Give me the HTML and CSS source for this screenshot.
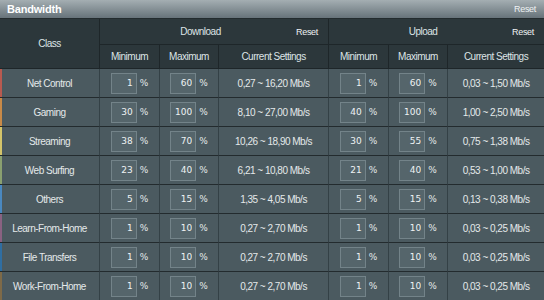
FILE: index.html
```html
<!DOCTYPE html>
<html lang="en">
<head>
<meta charset="UTF-8">
<title>Bandwidth</title>
<link rel="stylesheet" href="styles.css">
</head>
<body>
<div class="panel">
  <div class="panel-title">
    <span class="panel-name">Bandwidth</span>
    <a class="reset" href="#">Reset</a>
  </div>
  <table class="qos">
    <colgroup>
      <col class="w-class">
      <col class="w-min">
      <col class="w-max">
      <col class="w-cur">
      <col class="w-min2">
      <col class="w-max">
      <col class="w-cur2">
    </colgroup>
    <thead>
      <tr class="head-top">
        <th rowspan="2">Class</th>
        <th colspan="3">
          <div class="group">
            <span class="group-name">Download</span>
            <a class="reset" href="#">Reset</a>
          </div>
        </th>
        <th colspan="3">
          <div class="group">
            <span class="group-name">Upload</span>
            <a class="reset" href="#">Reset</a>
          </div>
        </th>
      </tr>
      <tr class="head-sub">
        <th>Minimum</th>
        <th>Maximum</th>
        <th>Current Settings</th>
        <th>Minimum</th>
        <th>Maximum</th>
        <th>Current Settings</th>
      </tr>
    </thead>
    <tbody>
      <tr>
        <td class="cls cls-net">Net Control</td>
        <td><div class="pct"><input type="text" value="1"><span>%</span></div></td>
        <td><div class="pct"><input type="text" value="60"><span>%</span></div></td>
        <td>0,27 ~ 16,20 Mb/s</td>
        <td><div class="pct"><input type="text" value="1"><span>%</span></div></td>
        <td><div class="pct"><input type="text" value="60"><span>%</span></div></td>
        <td>0,03 ~ 1,50 Mb/s</td>
      </tr>
      <tr>
        <td class="cls cls-gaming">Gaming</td>
        <td><div class="pct"><input type="text" value="30"><span>%</span></div></td>
        <td><div class="pct"><input type="text" value="100"><span>%</span></div></td>
        <td>8,10 ~ 27,00 Mb/s</td>
        <td><div class="pct"><input type="text" value="40"><span>%</span></div></td>
        <td><div class="pct"><input type="text" value="100"><span>%</span></div></td>
        <td>1,00 ~ 2,50 Mb/s</td>
      </tr>
      <tr>
        <td class="cls cls-stream">Streaming</td>
        <td><div class="pct"><input type="text" value="38"><span>%</span></div></td>
        <td><div class="pct"><input type="text" value="70"><span>%</span></div></td>
        <td>10,26 ~ 18,90 Mb/s</td>
        <td><div class="pct"><input type="text" value="30"><span>%</span></div></td>
        <td><div class="pct"><input type="text" value="55"><span>%</span></div></td>
        <td>0,75 ~ 1,38 Mb/s</td>
      </tr>
      <tr>
        <td class="cls cls-web">Web Surfing</td>
        <td><div class="pct"><input type="text" value="23"><span>%</span></div></td>
        <td><div class="pct"><input type="text" value="40"><span>%</span></div></td>
        <td>6,21 ~ 10,80 Mb/s</td>
        <td><div class="pct"><input type="text" value="21"><span>%</span></div></td>
        <td><div class="pct"><input type="text" value="40"><span>%</span></div></td>
        <td>0,53 ~ 1,00 Mb/s</td>
      </tr>
      <tr>
        <td class="cls cls-others">Others</td>
        <td><div class="pct"><input type="text" value="5"><span>%</span></div></td>
        <td><div class="pct"><input type="text" value="15"><span>%</span></div></td>
        <td>1,35 ~ 4,05 Mb/s</td>
        <td><div class="pct"><input type="text" value="5"><span>%</span></div></td>
        <td><div class="pct"><input type="text" value="15"><span>%</span></div></td>
        <td>0,13 ~ 0,38 Mb/s</td>
      </tr>
      <tr>
        <td class="cls cls-learn">Learn-From-Home</td>
        <td><div class="pct"><input type="text" value="1"><span>%</span></div></td>
        <td><div class="pct"><input type="text" value="10"><span>%</span></div></td>
        <td>0,27 ~ 2,70 Mb/s</td>
        <td><div class="pct"><input type="text" value="1"><span>%</span></div></td>
        <td><div class="pct"><input type="text" value="10"><span>%</span></div></td>
        <td>0,03 ~ 0,25 Mb/s</td>
      </tr>
      <tr>
        <td class="cls cls-files">File Transfers</td>
        <td><div class="pct"><input type="text" value="1"><span>%</span></div></td>
        <td><div class="pct"><input type="text" value="10"><span>%</span></div></td>
        <td>0,27 ~ 2,70 Mb/s</td>
        <td><div class="pct"><input type="text" value="1"><span>%</span></div></td>
        <td><div class="pct"><input type="text" value="10"><span>%</span></div></td>
        <td>0,03 ~ 0,25 Mb/s</td>
      </tr>
      <tr>
        <td class="cls cls-work">Work-From-Home</td>
        <td><div class="pct"><input type="text" value="1"><span>%</span></div></td>
        <td><div class="pct"><input type="text" value="10"><span>%</span></div></td>
        <td>0,27 ~ 2,70 Mb/s</td>
        <td><div class="pct"><input type="text" value="1"><span>%</span></div></td>
        <td><div class="pct"><input type="text" value="10"><span>%</span></div></td>
        <td>0,03 ~ 0,25 Mb/s</td>
      </tr>
    </tbody>
  </table>
</div>
</body>
</html>
```

FILE: styles.css
```css
body {
  margin: 0;
  background: #4b5a60;
  font-family: 'Liberation Sans', Arial, sans-serif;
  font-size: 10px;
  letter-spacing: -0.5px;
  color: #e4e9ea;
}
.panel-title {
  height: 18px;
  background: linear-gradient(#a4aeb2, #67737a);
  border-bottom: 1px solid #232b2e;
  display: flex;
  align-items: center;
  justify-content: space-between;
  padding: 0 8px 0 7px;
}
.panel-name {
  font-weight: bold;
  font-size: 11px;
  letter-spacing: -0.2px;
  color: #ffffff;
}
.reset {
  font-size: 9px;
  letter-spacing: -0.3px;
  color: #eef2f3;
  text-decoration: none;
}
.qos {
  width: 544px;
  table-layout: fixed;
  border-collapse: separate;
  border-spacing: 0;
}
.w-class { width: 100px; }
.w-min { width: 60px; }
.w-max { width: 59px; }
.w-cur { width: 110px; }
.w-min2 { width: 60px; }
.w-cur2 { width: 96px; }
.qos th {
  background: #2c373b;
  font-weight: normal;
  color: #dde4e6;
  border-right: 1px solid #1e2629;
  border-bottom: 1px solid #1e2629;
  padding: 0;
}
.qos th:last-child {
  border-right: none;
}
.head-top th {
  height: 25px;
}
.head-sub th {
  height: 23px;
}
.group {
  display: flex;
  align-items: center;
  padding: 0 10px 0 5px;
}
.group-name {
  flex: 1;
  text-align: center;
}
.qos td {
  height: 28px;
  padding: 0;
  text-align: center;
  background: #4b5a60;
  border-right: 1px solid #344146;
  border-bottom: 1px solid #232b2e;
}
.qos td:last-child {
  border-right: none;
}
.pct {
  display: flex;
  align-items: center;
  justify-content: center;
  gap: 3px;
  font-family: 'DejaVu Sans', sans-serif;
  font-size: 9px;
  letter-spacing: 0;
}
.pct input {
  width: 26px;
  height: 21px;
  box-sizing: border-box;
  margin: 0;
  padding: 0 3px 0 0;
  border: 1px solid #738389;
  background: #55656b;
  color: #eef2f3;
  font-family: 'DejaVu Sans', sans-serif;
  font-size: 9px;
  text-align: right;
  outline: none;
}
.cls-net { box-shadow: inset 2px 0 0 #b85a50; }
.cls-gaming { box-shadow: inset 2px 0 0 #c88a48; }
.cls-stream { box-shadow: inset 2px 0 0 #d4c46a; }
.cls-web { box-shadow: inset 2px 0 0 #8aa070; }
.cls-others { box-shadow: inset 2px 0 0 #4a88c0; }
.cls-learn { box-shadow: inset 2px 0 0 #8a6282; }
.cls-files { box-shadow: inset 2px 0 0 #2f6ea2; }
.cls-work { box-shadow: inset 2px 0 0 #7e6a48; }
```
